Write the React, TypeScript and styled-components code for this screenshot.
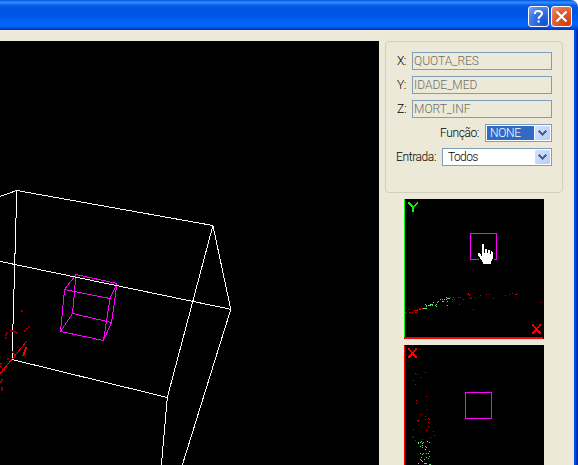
import React from 'react';
import styled, { createGlobalStyle } from 'styled-components';

const Global = createGlobalStyle`
  * { box-sizing: border-box; }
  body { margin: 0; overflow: hidden; background: #fff; }
`;

const Window = styled.div`
  width: 578px;
  height: 465px;
  display: flex;
  flex-direction: column;
  overflow: hidden;
  border-top-right-radius: 7px;
  background: #ece9d8;
  font-family: Roboto, 'Liberation Sans', sans-serif;
  font-size: 12px;
  font-weight: 300;
  color: #000;
`;

const TitleBar = styled.header`
  flex: none;
  height: 30px;
  display: flex;
  justify-content: flex-end;
  gap: 2px;
  padding: 6px 6px 0 0;
  background: linear-gradient(#0860e8 0, #0860e8 1px, #3a91ff 2px, #2b83fa 3px, #0a62ec 5px, #0055e2 8px, #0054e3 14px, #005bf0 19px, #0066ff 23px, #0064fb 26px, #0058ea 27px, #0047d5 28px, #0036c0 30px);
`;

const CaptionButton = styled.button<{ $danger?: boolean }>`
  width: 21px;
  height: 21px;
  padding: 0;
  border: 1px solid #fff;
  border-radius: 3px;
  background: ${p => p.$danger
    ? 'radial-gradient(circle at 80% 85%, #d43c0c 0, #e25b34 55%, #eb9479 100%)'
    : 'radial-gradient(circle at 80% 85%, #1250d4 0, #3b74e6 55%, #7ba3f2 100%)'};
  svg { display: block; }
`;

const Body = styled.main`
  flex: 1;
  min-height: 0;
  display: flex;
  padding: 11px 4px 0 0;
  background: linear-gradient(90deg, #0a50ee, #0046e4 45%, #0030b8 75%, #001c98) right / 4px 100% no-repeat;
`;

const Scene = styled.svg`
  flex: none;
  display: block;
  width: 379px;
  height: 424px;
  background: #000;
`;

const Sidebar = styled.aside`
  flex: none;
  width: 178px;
  margin-left: 6px;
  display: flex;
  flex-direction: column;
`;

const Group = styled.section`
  flex: none;
  height: 152px;
  border: 1px solid #d0d0bf;
  border-radius: 4px;
  padding: 10px 10px 0 4px;
  display: flex;
  flex-direction: column;
  gap: 6px;
`;

const Row = styled.label`
  height: 18px;
  display: flex;
  justify-content: flex-end;
  align-items: center;
  gap: 6px;
`;

const Caption = styled.span`
  flex: none;
  white-space: nowrap;
  letter-spacing: -0.4px;
`;

const Field = styled.div`
  flex: none;
  width: 140px;
  height: 18px;
  border: 1px solid #7f9db9;
  padding-left: 1px;
  line-height: 17px;
  color: #706e66;
`;

const Combo = styled.div<{ $width: number }>`
  flex: none;
  width: ${p => p.$width}px;
  height: 18px;
  display: flex;
  border: 1px solid #7f9db9;
  padding: 1px;
  background: #fff;
`;

const ComboValue = styled.span<{ $selected?: boolean }>`
  flex: 1;
  padding-left: ${p => (p.$selected ? 3 : 4)}px;
  line-height: 15px;
  letter-spacing: ${p => (p.$selected ? -0.3 : -0.6)}px;
  color: ${p => (p.$selected ? '#fff' : '#000')};
  background: ${p => (p.$selected ? '#316ac5' : '#fff')};
`;

const ComboArrow = styled.span`
  width: 15px;
  margin-left: 1px;
  display: flex;
  align-items: center;
  justify-content: center;
  border-radius: 1px;
  background: linear-gradient(135deg, #d5e2fd, #b7cbfa);
`;

const Plots = styled.div`
  display: flex;
  flex-direction: column;
  gap: 6px;
  padding: 6px 0 0 19px;
`;

const Plot = styled.svg`
  display: block;
  flex: none;
  width: 140px;
  height: 140px;
  background: #000;
`;

type Point = [number, number];

const dots = (points: Point[], s = 1) => points.map(([x, y]) => `M${x} ${y}h${s}v${s}h-${s}z`).join('');

const xyRed: Point[] = [
  [1,113],[5,110],[5,113],[6,113],[8,113],[11,113],[12,113],[10,111],[11,111],[12,111],[13,111],[13,110],
  [15,109],[16,109],[15,110],[16,110],[18,109],[46,98],[49,98],[48,100],[50,100],[48,102],[54,98],[56,98],
  [59,100],[55,105],[69,110],[63,95],[64,94],[64,95],[66,95],[65,96],[65,99],[66,98],[67,99],[71,98],[76,96],
  [82,95],[85,95],[89,99],[101,96],[105,95],[108,94],[111,95],[112,95],[113,94],[136,103],
];
const xyGreen: Point[] = [
  [19,109],[20,109],[21,109],[22,109],[22,107],[22,106],[21,105],[24,106],[25,106],[26,106],[26,105],[27,105],
  [28,105],[28,106],[29,103],[31,106],[32,105],[32,107],[33,103],[34,102],[36,100],[38,100],[38,102],[39,102],
  [40,100],[42,100],[42,98],[43,99],[44,99],[45,99],[43,102],[43,106],
];
const yxRed: Point[] = [
  [8,0],[16,4],[21,27],[11,28],[13,29],[16,32],[9,35],[11,39],[22,51],[12,55],[12,58],[23,64],[16,69],[21,71],
  [21,74],[24,73],[25,74],[13,75],[14,75],[14,76],[24,77],[24,81],[9,84],[22,85],[29,86],[30,90],[26,92],[9,91],
  [8,92],[11,95],[18,94],
];
const yxGreen: Point[] = [
  [14,97],[14,98],[16,97],[17,96],[19,97],[18,98],[23,96],[25,97],[18,100],[16,101],[18,102],[21,101],[22,102],
  [21,104],[25,106],[16,108],[19,108],[18,109],[22,108],[24,108],[25,111],[17,112],[22,112],[24,113],[16,114],
  [17,115],[20,114],[18,116],[14,118],[20,118],[21,118],[22,118],[25,119],[26,119],
];
const cloud: Point[] = [
  [21,310],[28,326],[26,328],[24,330],[6,332],[5,334],[5,337],[10,330],[12,330],[14,331],[16,332],[12,351],
  [13,353],[7,358],[0,363],[0,366],[2,368],[3,369],[1,371],[1,379],[0,381],[1,387],[1,389],
];

const AxisX = ({ x, y }: { x: number; y: number }) => (
  <path
    transform={`translate(${x} ${y})`}
    fill="#f00"
    d="M0 0h2v2h1v1h1v1h1v-1h1v-1h1v-2h2v2h-1v1h-1v1h-1v2h1v1h1v1h1v2h-2v-1h-1v-1h-1v-1h-1v1h-1v1h-1v1h-2v-2h1v-1h1v-1h1v-2h-1v-1h-1v-1h-1z"
  />
);

const Chevron = () => (
  <ComboArrow>
    <svg width="9" height="7" viewBox="0 0 9 7" shapeRendering="crispEdges">
      <path fill="#4d6185" d="M0 1h1v-1h1v1h1v1h1v1h1v-1h1v-1h1v-1h1v1h1v1h-1v1h-1v1h-1v1h-1v1h-1v-1h-1v-1h-1v-1h-1v-1h-1z" />
    </svg>
  </ComboArrow>
);

const variables = [
  ['X:', 'QUOTA_RES'],
  ['Y:', 'IDADE_MED'],
  ['Z:', 'MORT_INF'],
];

export default function App() {
  return (
    <>
      <Global />
      <Window>
        <TitleBar>
          <CaptionButton aria-label="Help">
            <svg width="19" height="19" viewBox="0 0 19 19" fill="none" stroke="#fff" strokeWidth="2">
              <path d="M6 7V5.8Q6.3 4 9.3 4Q13 4 13 6.7Q13 8 11 9.3Q9.6 10.2 9.6 12" />
              <path d="M8.5 14.5h2.2" />
            </svg>
          </CaptionButton>
          <CaptionButton $danger aria-label="Close">
            <svg width="19" height="19" viewBox="0 0 19 19" stroke="#fff" strokeWidth="2.2">
              <path d="M4.5 4.5L14.5 14.5M14.5 4.5L4.5 14.5" />
            </svg>
          </CaptionButton>
        </TitleBar>
        <Body>
          <Scene viewBox="0 41 379 424" shapeRendering="crispEdges" fill="none">
            <path
              stroke="#f0f"
              d="M64.5 289.5L110 298.5L103.5 340.5L60.5 331.5ZM76 274.5L117 283.5L111.5 322.5L72.5 313.5ZM64.5 289.5L76 274.5M110 298.5L117 283.5M103.5 340.5L111.5 322.5M60.5 331.5L72.5 313.5"
            />
            <path
              stroke="#fff"
              d="M-1 196.8L16.8 190.5L212.9 225.5L230.8 309.3L182 466M-1 261.2L230.8 309.3M16.8 190.5L12 359.5L167.3 397.5L161.3 466M212.9 225.5L167.3 397.5"
            />
            <path fill="#780000" d={dots(cloud, 2)} />
            <path fill="#b80000" d={dots(cloud)} />
            <path stroke="#f00" d="M-1 375L26.5 341.5M22.5 356.5L25.5 347.5M23.5 356.5L26.5 347.5" />
          </Scene>
          <Sidebar>
            <Group>
              {variables.map(([axis, name]) => (
                <Row key={axis}>
                  <Caption>{axis}</Caption>
                  <Field>{name}</Field>
                </Row>
              ))}
              <Row>
                <Caption>Função:</Caption>
                <Combo $width={67}>
                  <ComboValue $selected>NONE</ComboValue>
                  <Chevron />
                </Combo>
              </Row>
              <Row>
                <Caption>Entrada:</Caption>
                <Combo $width={110}>
                  <ComboValue>Todos</ComboValue>
                  <Chevron />
                </Combo>
              </Row>
            </Group>
            <Plots>
              <Plot viewBox="0 0 140 140" shapeRendering="crispEdges">
                <path fill="#0f0" d="M0 0h1v138h-1z" />
                <path fill="#f00" d="M0 138h139v2h-139z" />
                <path fill="#0f0" d="M4 3h2v1h1v1h1v1h1v1h1v-1h1v-1h1v-1h1v-1h1v2h-1v1h-1v1h-1v1h-1v5h-2v-5h-1v-1h-1v-1h-1v-1h-1z" />
                <AxisX x={128} y={125} />
                <path fill="#d00000" d={dots(xyRed)} />
                <path fill="#50f060" d={dots(xyGreen)} />
                <rect x="66.5" y="34.5" width="26" height="26" fill="none" stroke="#f0f" />
                <path
                  fill="#fff"
                  stroke="#000"
                  strokeWidth="2"
                  paintOrder="stroke"
                  d="M78 45h2v9h1v-4h2v4h1v-3h2v4h1v-3h1v1h1v7h-1v2h-1v3h-8v-2h-1v-2h-1v-1h-1v-2h-1v-1h-1v-3h2v1h1v2h1z"
                />
              </Plot>
              <Plot viewBox="0 0 140 140" shapeRendering="crispEdges">
                <path fill="#f00" d="M0 0h1v140h-1z" />
                <AxisX x={4} y={3} />
                <path fill="#d00000" d={dots(yxRed)} />
                <path fill="#50f060" d={dots(yxGreen)} />
                <rect x="61.5" y="47.5" width="26" height="26" fill="none" stroke="#f0f" />
              </Plot>
            </Plots>
          </Sidebar>
        </Body>
      </Window>
    </>
  );
}
